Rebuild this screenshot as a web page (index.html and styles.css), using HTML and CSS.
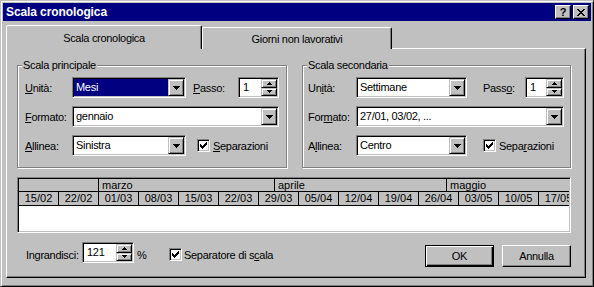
FILE: index.html
```html
<!DOCTYPE html>
<html lang="it">
<head>
    <meta charset="UTF-8">
    <title>Scala cronologica</title>
    <link rel="stylesheet" href="styles.css">
</head>
<body>
<div class="dialog">
    <div class="titlebar">
        <span class="title">Scala cronologica</span>
        <div class="caption-btns">
            <span class="cap-btn">?</span>
            <span class="cap-btn">
                <svg width="8" height="7" viewBox="0 0 8 7" shape-rendering="crispEdges"><path d="M0 0h2v1H0z M6 0h2v1H6z M1 1h2v1H1z M5 1h2v1H5z M2 2h4v1H2z M3 3h2v1H3z M2 4h4v1H2z M1 5h2v1H1z M5 5h2v1H5z M0 6h2v1H0z M6 6h2v1H6z" fill="#000"/></svg>
            </span>
        </div>
    </div>

    <div class="tabs">
        <div class="tab active">Scala cronologica</div>
        <div class="tab">Giorni non lavorativi</div>
    </div>

    <div class="tab-page">
        <div class="groups">
            <fieldset class="group group-main">
                <legend>Scala principale</legend>
                <div class="rows">
                    <div class="row">
                        <span class="lbl"><u>U</u>nità:</span>
                        <div class="field combo w-short"><span class="value sel">Mesi</span><span class="drop"><svg width="7" height="4" shape-rendering="crispEdges"><path d="M0 0h7v1H0z M1 1h5v1H1z M2 2h3v1H2z M3 3h1v1H3z"/></svg></span></div>
                        <span class="lbl passo"><u>P</u>asso:</span>
                        <div class="field spin w-step"><span class="value">1</span><span class="updown"><span class="ud"><svg width="5" height="3" shape-rendering="crispEdges"><path d="M2 0h1v1H2z M1 1h3v1H1z M0 2h5v1H0z"/></svg></span><span class="ud"><svg width="5" height="3" shape-rendering="crispEdges"><path d="M0 0h5v1H0z M1 1h3v1H1z M2 2h1v1H2z"/></svg></span></span></div>
                    </div>
                    <div class="row">
                        <span class="lbl"><u>F</u>ormato:</span>
                        <div class="field combo w-long"><span class="value">gennaio</span><span class="drop"><svg width="7" height="4" shape-rendering="crispEdges"><path d="M0 0h7v1H0z M1 1h5v1H1z M2 2h3v1H2z M3 3h1v1H3z"/></svg></span></div>
                    </div>
                    <div class="row">
                        <span class="lbl"><u>A</u>llinea:</span>
                        <div class="field combo w-short"><span class="value">Sinistra</span><span class="drop"><svg width="7" height="4" shape-rendering="crispEdges"><path d="M0 0h7v1H0z M1 1h5v1H1z M2 2h3v1H2z M3 3h1v1H3z"/></svg></span></div>
                        <div class="chk-row">
                            <span class="check"><svg width="7" height="7" shape-rendering="crispEdges"><path d="M6 0h1v1H6z M5 1h2v1H5z M0 2h1v1H0z M4 2h3v1H4z M0 3h2v1H0z M3 3h3v1H3z M0 4h5v1H0z M1 5h3v1H1z M2 6h1v1H2z"/></svg></span>
                            <span><u>S</u>eparazioni</span>
                        </div>
                    </div>
                </div>
            </fieldset>

            <fieldset class="group group-sec">
                <legend>Scala secondaria</legend>
                <div class="rows">
                    <div class="row">
                        <span class="lbl">Un<u>i</u>tà:</span>
                        <div class="field combo w-short"><span class="value">Settimane</span><span class="drop"><svg width="7" height="4" shape-rendering="crispEdges"><path d="M0 0h7v1H0z M1 1h5v1H1z M2 2h3v1H2z M3 3h1v1H3z"/></svg></span></div>
                        <span class="lbl passo">Pass<u>o</u>:</span>
                        <div class="field spin w-step"><span class="value">1</span><span class="updown"><span class="ud"><svg width="5" height="3" shape-rendering="crispEdges"><path d="M2 0h1v1H2z M1 1h3v1H1z M0 2h5v1H0z"/></svg></span><span class="ud"><svg width="5" height="3" shape-rendering="crispEdges"><path d="M0 0h5v1H0z M1 1h3v1H1z M2 2h1v1H2z"/></svg></span></span></div>
                    </div>
                    <div class="row">
                        <span class="lbl">For<u>m</u>ato:</span>
                        <div class="field combo w-long"><span class="value">27/01, 03/02, ...</span><span class="drop"><svg width="7" height="4" shape-rendering="crispEdges"><path d="M0 0h7v1H0z M1 1h5v1H1z M2 2h3v1H2z M3 3h1v1H3z"/></svg></span></div>
                    </div>
                    <div class="row">
                        <span class="lbl">A<u>l</u>linea:</span>
                        <div class="field combo w-short"><span class="value">Centro</span><span class="drop"><svg width="7" height="4" shape-rendering="crispEdges"><path d="M0 0h7v1H0z M1 1h5v1H1z M2 2h3v1H2z M3 3h1v1H3z"/></svg></span></div>
                        <div class="chk-row">
                            <span class="check"><svg width="7" height="7" shape-rendering="crispEdges"><path d="M6 0h1v1H6z M5 1h2v1H5z M0 2h1v1H0z M4 2h3v1H4z M0 3h2v1H0z M3 3h3v1H3z M0 4h5v1H0z M1 5h3v1H1z M2 6h1v1H2z"/></svg></span>
                            <span>Sepa<u>r</u>azioni</span>
                        </div>
                    </div>
                </div>
            </fieldset>
        </div>

        <div class="scale">
            <div class="months">
                <span class="mcell m-empty"></span>
                <span class="mcell m-mar">marzo</span>
                <span class="mcell m-apr">aprile</span>
                <span class="mcell m-may">maggio</span>
            </div>
            <div class="weeks">
                <span class="wcell">15/02</span>
                <span class="wcell">22/02</span>
                <span class="wcell">01/03</span>
                <span class="wcell">08/03</span>
                <span class="wcell">15/03</span>
                <span class="wcell">22/03</span>
                <span class="wcell">29/03</span>
                <span class="wcell">05/04</span>
                <span class="wcell">12/04</span>
                <span class="wcell">19/04</span>
                <span class="wcell">26/04</span>
                <span class="wcell">03/05</span>
                <span class="wcell">10/05</span>
                <span class="wcell">17/05</span>
            </div>
        </div>

        <div class="footer">
            <span class="zoom-lbl">Ingrandisci:</span>
            <div class="field spin w-zoom"><span class="value">121</span><span class="updown"><span class="ud"><svg width="5" height="3" shape-rendering="crispEdges"><path d="M2 0h1v1H2z M1 1h3v1H1z M0 2h5v1H0z"/></svg></span><span class="ud"><svg width="5" height="3" shape-rendering="crispEdges"><path d="M0 0h5v1H0z M1 1h3v1H1z M2 2h1v1H2z"/></svg></span></span></div>
            <span class="pct">%</span>
            <div class="chk-row">
                <span class="check"><svg width="7" height="7" shape-rendering="crispEdges"><path d="M6 0h1v1H6z M5 1h2v1H5z M0 2h1v1H0z M4 2h3v1H4z M0 3h2v1H0z M3 3h3v1H3z M0 4h5v1H0z M1 5h3v1H1z M2 6h1v1H2z"/></svg></span>
                <span>Separatore di s<u>c</u>ala</span>
            </div>
            <div class="buttons">
                <span class="btn default">OK</span>
                <span class="btn">Annulla</span>
            </div>
        </div>
    </div>
</div>
</body>
</html>
```

FILE: styles.css
```css
body {
    margin: 0;
    background-color: #c0c0c0;
    font-family: "Liberation Sans", Arial, sans-serif;
    font-size: 11px;
    color: #000;
}
.dialog {
    width: 594px;
    height: 287px;
    box-sizing: border-box;
    padding: 2px;
    background-color: #c0c0c0;
    border: 1px solid;
    border-color: #c0c0c0 #000 #000 #c0c0c0;
    box-shadow: inset 1px 1px #fff, inset -1px -1px #808080;
    letter-spacing: -0.3px;
}
.titlebar {
    height: 18px;
    background-color: #000080;
    color: #fff;
    display: flex;
    align-items: center;
    justify-content: space-between;
    padding: 0 2px 0 3px;
}
.title {
    font-size: 12px;
    font-weight: bold;
    letter-spacing: -0.1px;
}
.caption-btns {
    display: flex;
    gap: 2px;
}
.cap-btn {
    width: 16px;
    height: 14px;
    box-sizing: border-box;
    background-color: #c0c0c0;
    border: 1px solid;
    border-color: #fff #000 #000 #fff;
    box-shadow: inset -1px -1px #808080;
    color: #000;
    font-size: 11px;
    font-weight: bold;
    letter-spacing: 0;
    line-height: 12px;
    display: flex;
    align-items: center;
    justify-content: center;
}

/* tabs */
.tabs {
    display: flex;
    align-items: flex-end;
    height: 24px;
    margin: 4px 5px -1px 3px;
}
.tab {
    box-sizing: border-box;
    width: 190px;
    height: 22px;
    background-color: #c0c0c0;
    border: 1px solid;
    border-bottom: 0;
    border-color: #fff #000 transparent #fff;
    border-radius: 2px 2px 0 0;
    box-shadow: inset -1px 0 #808080;
    display: flex;
    align-items: center;
    justify-content: center;
}
.tab.active {
    width: 196px;
    height: 24px;
    position: relative;
    z-index: 1;
}
.tab-page {
    margin: 0 5px 0 3px;
    padding: 10px 14px 10px 10px;
    border: 1px solid;
    border-color: #fff #000 #000 #fff;
    box-shadow: inset -1px -1px #808080;
}

/* group boxes */
.groups {
    display: flex;
    gap: 15px;
}
.group {
    margin: 0;
    padding: 0;
    min-width: 0;
    box-sizing: border-box;
    border: 1px solid #808080;
    box-shadow: inset 1px 1px #fff, 1px 1px #fff;
}
.group-main { width: 270px; }
.group-sec { width: 269px; }
.group legend {
    padding: 0 1px;
    margin-left: 4px;
    line-height: 13px;
    background-color: #c0c0c0;
}
.rows {
    display: flex;
    flex-direction: column;
    gap: 8px;
    padding: 5px 7px 11px 7px;
}
.group-sec .rows {
    padding: 5px 6px 11px 5px;
}
.row {
    display: flex;
    align-items: center;
    height: 21px;
}
.lbl {
    width: 47px;
    flex: none;
}
.group-sec .lbl { width: 48px; }
.lbl.passo {
    width: 45px;
    margin-left: 7px;
}
.group-sec .lbl.passo {
    width: 42px;
    margin-left: 16px;
}

/* sunken fields */
.field {
    box-sizing: border-box;
    height: 21px;
    padding: 1px;
    background-color: #fff;
    border: 1px solid;
    border-color: #808080 #fff #fff #808080;
    box-shadow: inset 1px 1px #000, inset -1px -1px #c0c0c0;
    display: flex;
    flex: none;
}
.field .value {
    flex: 1;
    padding-left: 2px;
    line-height: 17px;
    white-space: nowrap;
    overflow: hidden;
}
.field .value.sel {
    background-color: #000080;
    color: #fff;
}
.w-short { width: 114px; }
.group-sec .w-short { width: 111px; }
.w-long { width: 207px; }
.group-sec .w-long { width: 208px; }
.w-step { width: 41px; }
.group-sec .w-step { width: 39px; }
.w-zoom { width: 52px; }
.spin .value { padding-left: 3px; }

.drop, .ud {
    box-sizing: border-box;
    background-color: #c0c0c0;
    border: 1px solid;
    border-color: #c0c0c0 #000 #000 #c0c0c0;
    box-shadow: inset 1px 1px #fff, inset -1px -1px #808080;
    display: flex;
    align-items: center;
    justify-content: center;
}
.drop {
    width: 16px;
    height: 17px;
}
.updown {
    width: 16px;
    display: flex;
    flex-direction: column;
}
.ud {
    flex: 1;
}

/* check boxes */
.chk-row {
    display: flex;
    align-items: center;
    gap: 3px;
    margin-left: 11px;
}
.group-sec .chk-row { margin-left: 16px; }
.check {
    width: 13px;
    height: 13px;
    box-sizing: border-box;
    padding: 2px;
    background-color: #fff;
    border: 1px solid;
    border-color: #808080 #fff #fff #808080;
    box-shadow: inset 1px 1px #000, inset -1px -1px #c0c0c0;
    display: flex;
}

/* time scale preview */
.scale {
    margin-top: 9px;
    height: 56px;
    box-sizing: border-box;
    padding: 1px;
    background-color: #fff;
    border: 1px solid;
    border-color: #808080 #fff #fff #808080;
    box-shadow: inset 1px 1px #000, inset -1px -1px #c0c0c0;
    overflow: hidden;
    letter-spacing: 0;
}
.months, .weeks {
    display: flex;
    box-sizing: border-box;
    background-color: #c0c0c0;
    border-bottom: 1px solid #000;
    overflow: hidden;
}
.months { height: 13px; }
.weeks { height: 14px; }
.mcell {
    flex: none;
    box-sizing: border-box;
    padding-left: 3px;
    line-height: 12px;
    border-right: 1px solid #000;
}
.m-empty { width: 80px; }
.m-mar { width: 176px; }
.m-apr { width: 172px; }
.m-may { flex: 1; border-right: 0; }
.wcell {
    flex: none;
    width: 40px;
    box-sizing: border-box;
    text-align: center;
    line-height: 13px;
    border-right: 1px solid #000;
}

/* bottom row */
.footer {
    display: flex;
    align-items: center;
    height: 25px;
    margin-top: 9px;
}
.zoom-lbl {
    width: 56px;
    margin-left: 9px;
}
.footer .field { align-self: flex-start; }
.pct {
    width: 32px;
    margin-left: 3px;
}
.footer .chk-row {
    margin-left: 0;
    gap: 2px;
}
.buttons {
    margin-left: auto;
    align-self: flex-end;
    display: flex;
    gap: 8px;
}
.btn {
    width: 69px;
    height: 22px;
    box-sizing: border-box;
    border: 1px solid;
    border-color: #fff #000 #000 #fff;
    box-shadow: inset -1px -1px #808080;
    display: flex;
    align-items: center;
    justify-content: center;
}
.btn.default {
    border-color: #000;
    box-shadow: inset 1px 1px #fff, inset -1px -1px #000, inset -2px -2px #808080;
}
```
